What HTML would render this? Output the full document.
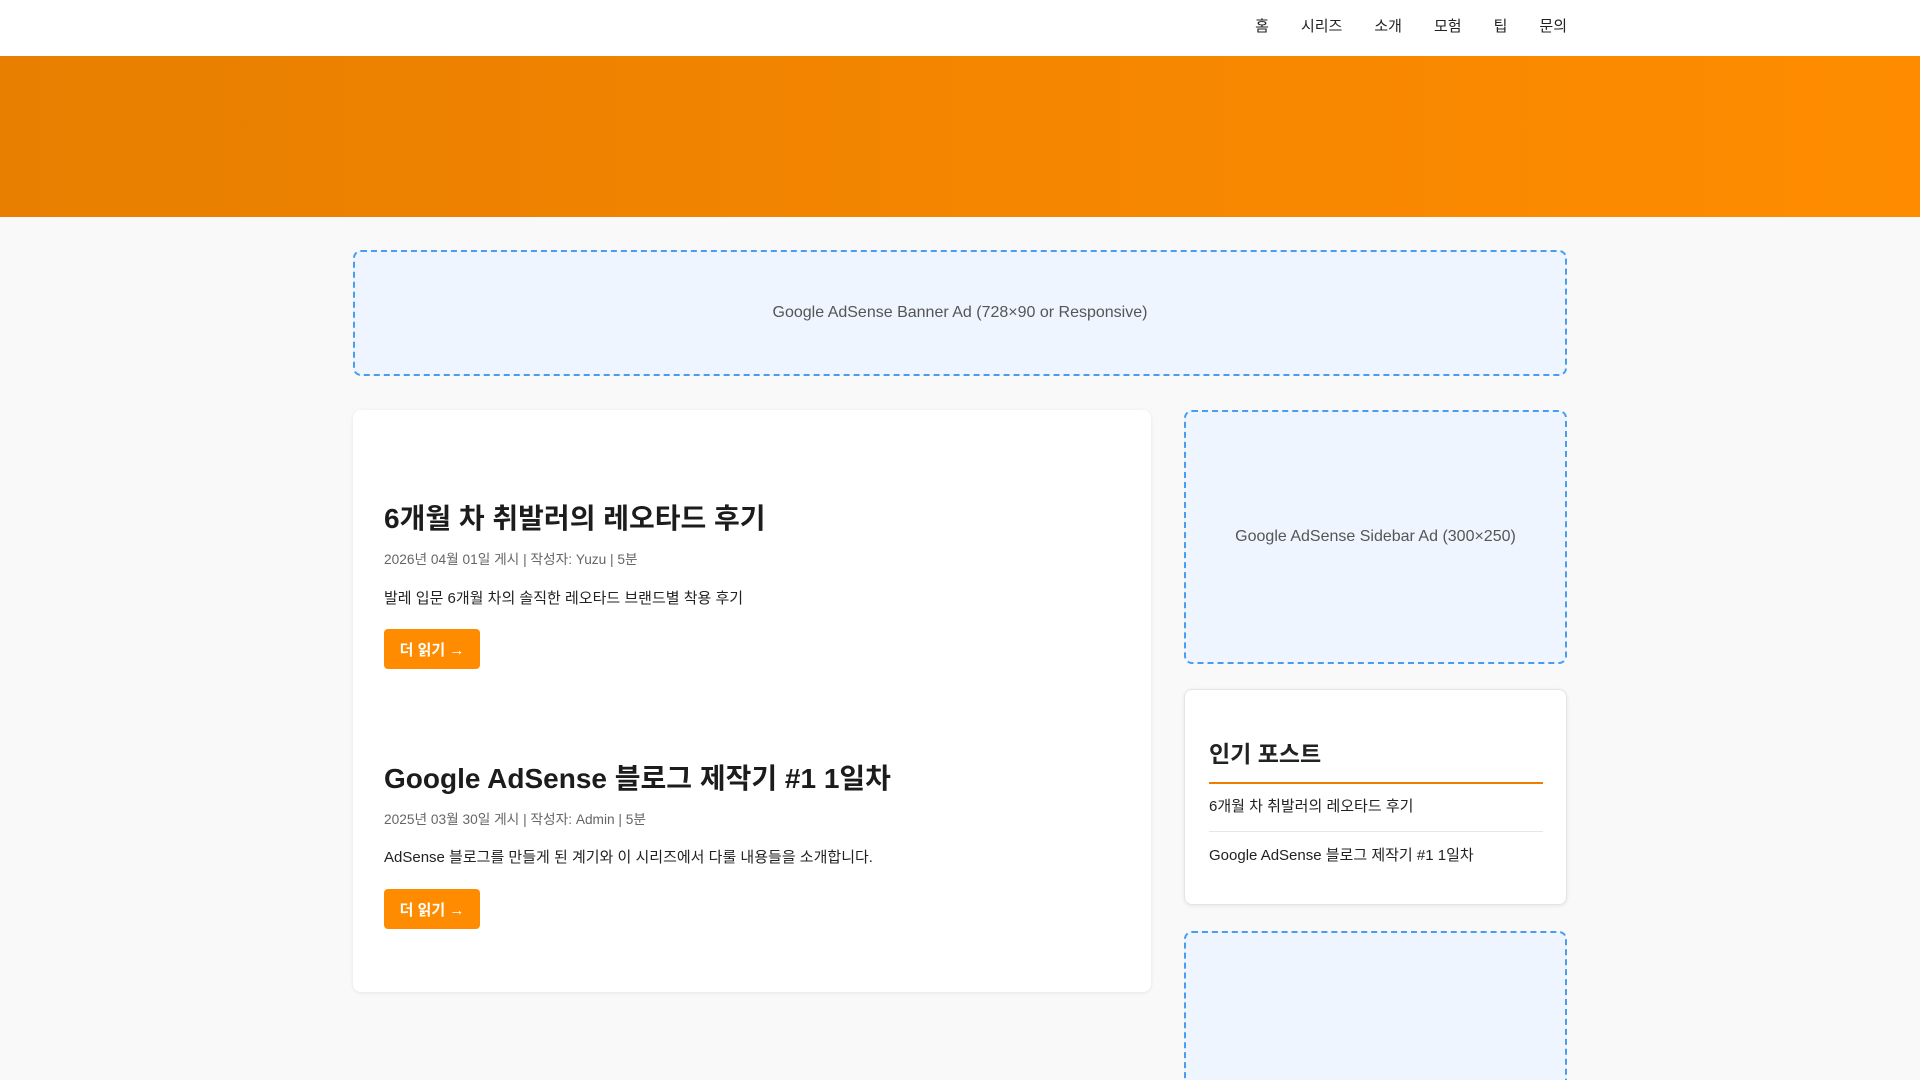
<!DOCTYPE html>
<html style="height:1080px;overflow:hidden"><head><meta charset="utf-8"><style>
*{margin:0;padding:0;box-sizing:border-box}
body{width:1920px;height:1080px;overflow:hidden;background:#f9f9f9;font-family:"Liberation Sans","Noto Sans CJK KR",sans-serif;color:#222;position:relative}
.hdr{position:absolute;left:0;top:0;width:1920px;height:56px;background:#fff;box-shadow:0 1px 3px rgba(0,0,0,.12)}
.nav{position:absolute;right:353px;top:16px;display:flex;font-size:15px;color:#222}
.nav span{margin-left:32px;line-height:22px}
.hero{position:absolute;left:0;top:56px;width:1920px;height:161px;background:linear-gradient(90deg,#e87f00,#ff8c00)}
.ad{position:absolute;background:#eef5ff;border:2px dashed #4a9cf0;border-radius:8px;display:flex;align-items:center;justify-content:center;font-size:16px;color:#555}
.card{position:absolute;background:#fff;border-radius:8px;box-shadow:0 1px 4px rgba(0,0,0,.08)}
.a{position:absolute;white-space:nowrap}
.t{font-size:28px;font-weight:bold;line-height:40px;color:#1c1c1c}
.m{font-size:13.7px;color:#666;line-height:20px}
.e{font-size:15px;line-height:22px;color:#222}
.b{background:#ff8c00;color:#fff;font-size:15px;font-weight:bold;width:96px;height:40px;border-radius:4px;display:flex;align-items:center;justify-content:center}
</style></head><body>
<div class="hdr"><div class="nav"><span>홈</span><span>시리즈</span><span>소개</span><span>모험</span><span>팁</span><span>문의</span></div></div>
<div class="hero"></div>
<div class="ad" style="left:353px;top:250px;width:1214px;height:126px">Google AdSense Banner Ad (728×90 or Responsive)</div>
<div class="card" style="left:353px;top:410px;width:798px;height:582px">
<div class="a t" style="left:31px;top:89px">6개월 차 취발러의 레오타드 후기</div>
<div class="a m" style="left:31px;top:140px">2026년 04월 01일 게시 | 작성자: Yuzu | 5분</div>
<div class="a e" style="left:31px;top:178px">발레 입문 6개월 차의 솔직한 레오타드 브랜드별 착용 후기</div>
<div class="a b" style="left:31px;top:219px">더 읽기 →</div>
<div class="a t" style="left:31px;top:349px">Google AdSense 블로그 제작기 #1 1일차</div>
<div class="a m" style="left:31px;top:400px">2025년 03월 30일 게시 | 작성자: Admin | 5분</div>
<div class="a e" style="left:31px;top:437px">AdSense 블로그를 만들게 된 계기와 이 시리즈에서 다룰 내용들을 소개합니다.</div>
<div class="a b" style="left:31px;top:479px">더 읽기 →</div>
</div>
<div class="ad" style="left:1184px;top:410px;width:383px;height:254px">Google AdSense Sidebar Ad (300×250)</div>
<div class="card" style="left:1184px;top:689px;width:383px;height:216px;border:1px solid #e4e4e4">
<div class="a" style="left:24px;top:50px;font-size:23px;font-weight:bold;line-height:28px">인기 포스트</div>
<div class="a" style="left:24px;top:92px;width:334px;height:2px;background:#ef7d00"></div>
<div class="a e" style="left:24px;top:106px;font-size:15px">6개월 차 취발러의 레오타드 후기</div>
<div class="a" style="left:24px;top:141px;width:334px;height:1px;background:#e6e6e6"></div>
<div class="a e" style="left:24px;top:155px;font-size:15px">Google AdSense 블로그 제작기 #1 1일차</div>
</div>
<div class="ad" style="left:1184px;top:931px;width:383px;height:160px"></div>
</body></html>
